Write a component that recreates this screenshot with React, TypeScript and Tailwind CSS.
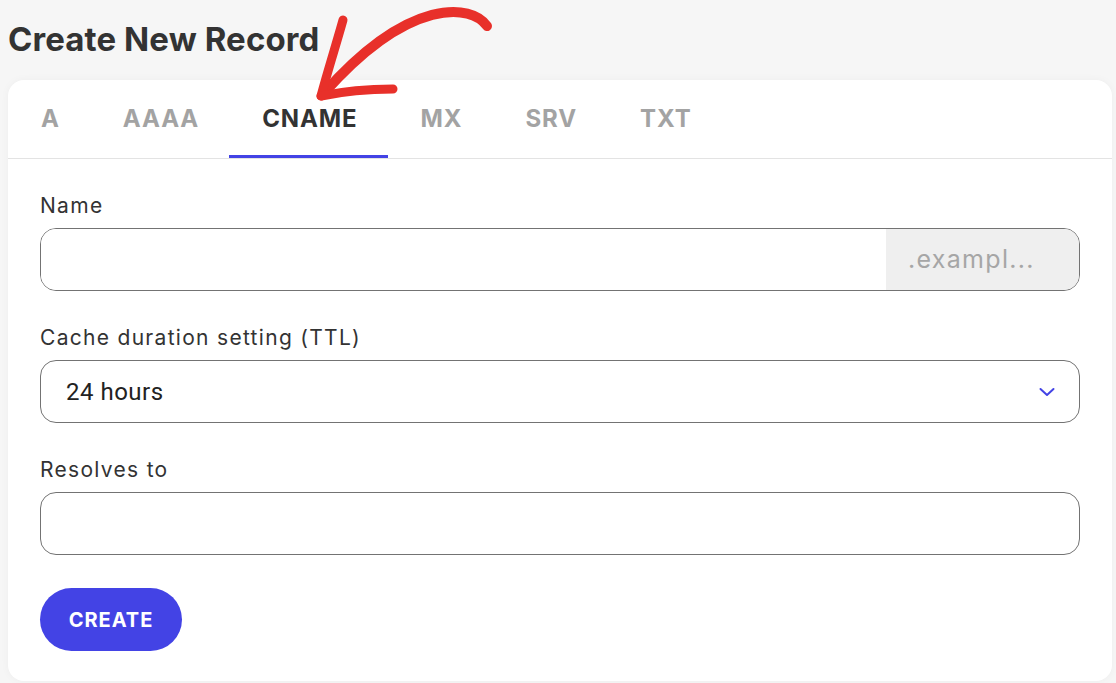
import React, { useState } from "react";

const tabs = ["A", "AAAA", "CNAME", "MX", "SRV", "TXT"];

const ui = { fontFamily: "Inter, 'Open Sans', sans-serif" };

const Field: React.FC<{ label: string; children: React.ReactNode }> = ({ label, children }) => (
  <div className="flex flex-col">
    <label className="h-6 mb-[11px] pt-px text-[21px] leading-6 text-[#333] tracking-[1.3px]">{label}</label>
    {children}
  </div>
);

const App: React.FC = () => {
  const [active, setActive] = useState<string>("CNAME");

  return (
    <div className="relative w-full min-h-[683px] bg-[#f6f6f6] pl-2 pr-1 overflow-hidden" style={ui}>
      <h1 className="h-[80px] pt-[19px] text-[33px] leading-[40px] font-bold text-[#333] tracking-[0.1px]">
        Create New Record
      </h1>

      <div className="bg-white rounded-2xl shadow-[0_0_8px_rgba(0,0,0,0.04)] pb-[30px]">
        {/* tabs */}
        <div className="flex h-[79px] border-b border-[#e3e3e3]">
          {tabs.map((t) => (
            <button
              key={t}
              onClick={() => setActive(t)}
              className={
                t === active
                  ? "pl-[33px] pr-[30px] h-full flex items-center text-[24px] font-bold tracking-[0.9px] text-[#333] border-b-[3px] border-[#4343e5] pt-[3px]"
                  : "pl-[33px] pr-[30px] h-full flex items-center text-[24px] font-bold tracking-[0.9px] text-[#a3a3a3] border-b-[3px] border-transparent pt-[3px]"
              }
            >
              {t}
            </button>
          ))}
        </div>

        {/* form */}
        <div className="px-8 pt-[34px] flex flex-col gap-[34px]">
          <Field label="Name">
            <div className="flex h-[63px] rounded-2xl border-[1.5px] border-[#737373] overflow-hidden">
              <input className="flex-1 px-6 outline-none bg-white" />
              <div className="w-[193px] bg-[#efefef] flex items-center pl-[22px] text-[25px] tracking-[1.3px] text-[#a6a6a6]">
                .exampl...
              </div>
            </div>
          </Field>

          <Field label="Cache duration setting (TTL)">
            <div className="flex items-center justify-between h-[63px] rounded-2xl border-[1.5px] border-[#737373] pl-[25px] pr-[24px]">
              <span className="text-[24px] tracking-[0.5px] text-[#222]" style={{ fontFamily: "Roboto, sans-serif" }}>
                24 hours
              </span>
              <svg width="16" height="10" viewBox="0 0 16 10" fill="none">
                <path d="M1.5 2 L8 8 L14.5 2" stroke="#4343e5" strokeWidth="2" strokeLinecap="round" strokeLinejoin="round" />
              </svg>
            </div>
          </Field>

          <Field label="Resolves to">
            <input className="h-[63px] rounded-2xl border-[1.5px] border-[#737373] px-6 outline-none" />
          </Field>

          <div className="-mt-px">
            <button className="h-[63px] w-[142px] rounded-full bg-[#4343e5] text-white text-[20px] font-bold tracking-[1px]">
              CREATE
            </button>
          </div>
        </div>
      </div>

      {/* annotation arrow */}
      <svg className="absolute left-[300px] top-0 pointer-events-none" width="210" height="110" viewBox="0 0 210 110" fill="none">
        <path d="M187 26 C172 4, 110 -4, 24 93" stroke="#e8302a" strokeWidth="10" strokeLinecap="round" />
        <path d="M43 20 C36 45, 28 70, 21 96" stroke="#e8302a" strokeWidth="9" strokeLinecap="round" />
        <path d="M21 96 C45 91, 70 89, 93 89" stroke="#e8302a" strokeWidth="9" strokeLinecap="round" />
      </svg>
    </div>
  );
};

export default App;
